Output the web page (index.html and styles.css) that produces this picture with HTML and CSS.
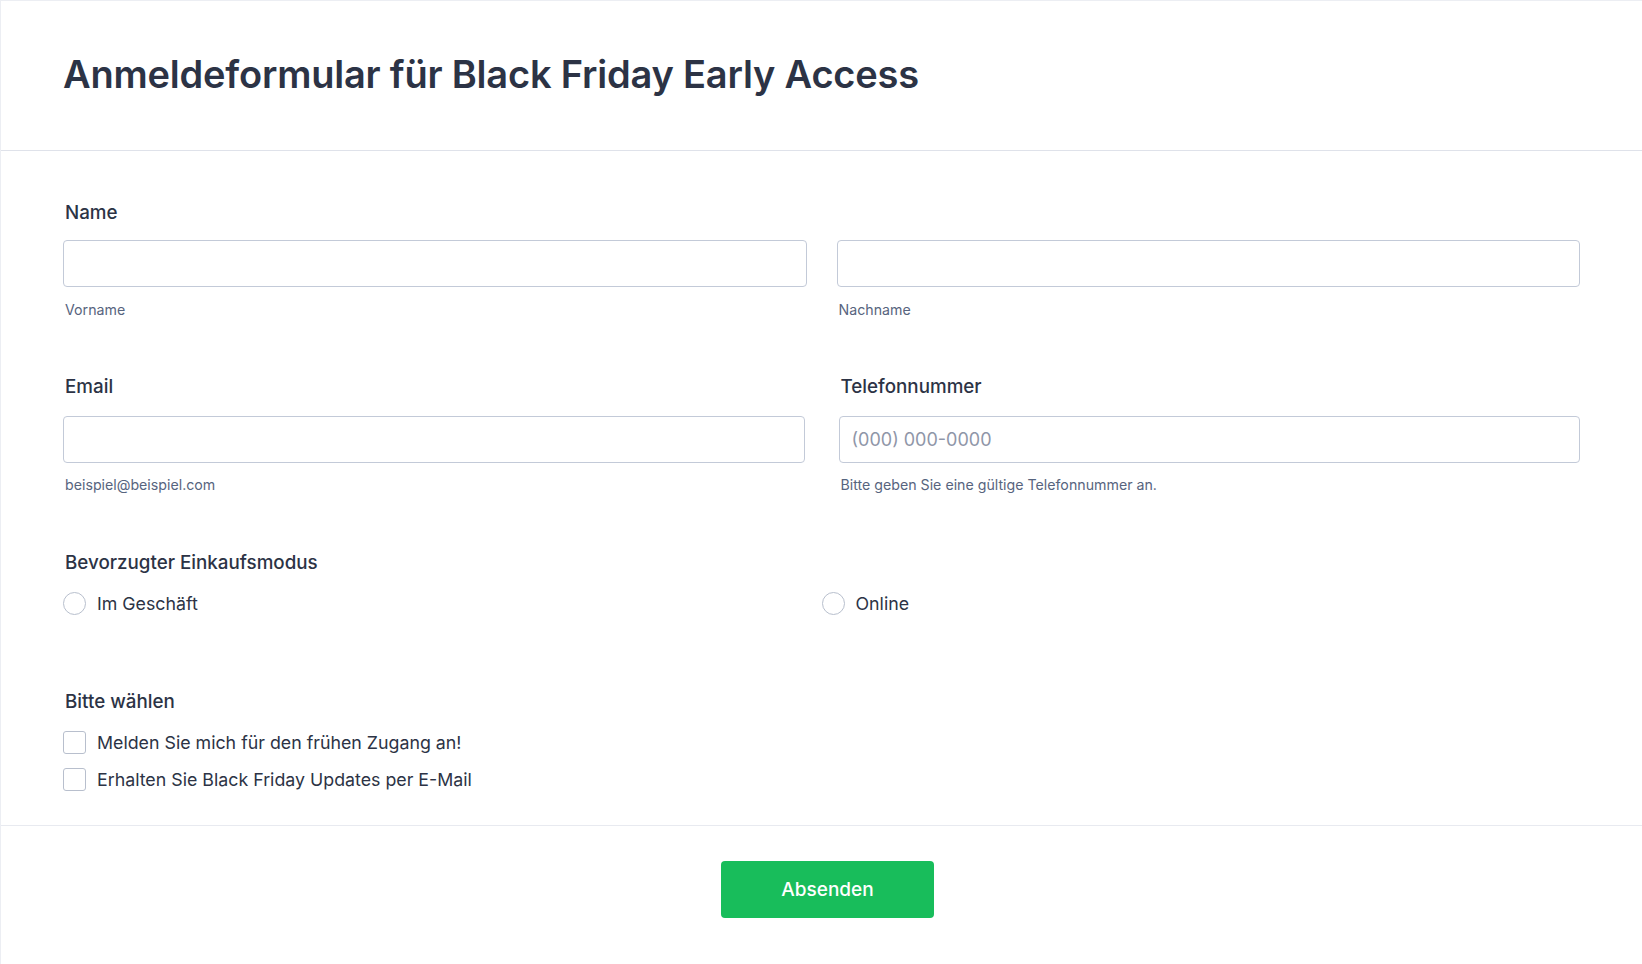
FILE: index.html
```html
<!DOCTYPE html>
<html lang="de">
<head>
<meta charset="utf-8">
<title>Anmeldeformular</title>
<link rel="stylesheet" href="styles.css">
</head>
<body>
<div class="card">
  <header class="header">
    <h1 class="title">Anmeldeformular für Black Friday Early Access</h1>
  </header>
  <form class="body">
    <div class="field field-name">
      <div class="label">Name</div>
      <div class="two-col gap-name">
        <div class="sub-field">
          <div class="input"></div>
          <div class="sublabel">Vorname</div>
        </div>
        <div class="sub-field">
          <div class="input"></div>
          <div class="sublabel">Nachname</div>
        </div>
      </div>
    </div>

    <div class="two-col gap-contact field-contact">
      <div class="field">
        <div class="label">Email</div>
        <div class="input"></div>
        <div class="sublabel">beispiel@beispiel.com</div>
      </div>
      <div class="field">
        <div class="label">Telefonnummer</div>
        <div class="input"><span class="placeholder">(000) 000-0000</span></div>
        <div class="sublabel">Bitte geben Sie eine gültige Telefonnummer an.</div>
      </div>
    </div>

    <div class="field field-radio">
      <div class="label">Bevorzugter Einkaufsmodus</div>
      <div class="radio-grid">
        <div class="option"><span class="radio"></span><span class="opt-text">Im Geschäft</span></div>
        <div class="option"><span class="radio"></span><span class="opt-text">Online</span></div>
      </div>
    </div>

    <div class="field field-check">
      <div class="label">Bitte wählen</div>
      <div class="checks">
        <div class="option"><span class="checkbox"></span><span class="opt-text">Melden Sie mich für den frühen Zugang an!</span></div>
        <div class="option"><span class="checkbox"></span><span class="opt-text">Erhalten Sie Black Friday Updates per E-Mail</span></div>
      </div>
    </div>
  </form>
  <footer class="footer">
    <div class="button">Absenden</div>
  </footer>
</div>
</body>
</html>
```

FILE: styles.css
```css
* { box-sizing: border-box; }
html, body { margin: 0; padding: 0; background: #ffffff; }
body {
  font-family: Inter, "Noto Sans", "Liberation Sans", sans-serif;
  color: #2c3345;
}
.card {
  border-top: 1px solid #eceef3;
  border-left: 1px solid #eceef3;
  min-height: 964px;
}
.header {
  height: 150px;
  padding: 0 62px 4px 62px;
  display: flex;
  align-items: center;
  border-bottom: 1px solid #dfe2ea;
}
.title {
  margin: 0;
  font-size: 38px;
  font-weight: 600;
  letter-spacing: -0.2px;
  color: #2c3345;
  line-height: 48px;
}
.body {
  padding: 50px 62px 34px 62px;
  border-bottom: 1px solid #e8eaf0;
}
.label {
  font-size: 18.8px;
  font-weight: 500;
  line-height: 24px;
  padding-left: 2px;
  color: #2c3345;
}
.two-col {
  display: grid;
  grid-template-columns: 1fr 1fr;
}
.gap-name { column-gap: 30px; margin-top: 15px; }
.gap-contact { column-gap: 34px; }
.field-contact { margin-top: 56px; }
.field-contact .input { margin-top: 17px; }
.input {
  height: 47px;
  border: 1px solid #c3cad8;
  border-radius: 4px;
  background: #fff;
  display: flex;
  align-items: center;
  padding: 0 12px;
}
.placeholder {
  font-size: 18px;
  color: #8f96a8;
}
.sublabel {
  font-size: 14.2px;
  line-height: 18px;
  color: #57647e;
  margin-top: 14px;
  padding-left: 2px;
}
.field-contact .sublabel { margin-top: 13px; }
.field-radio { margin-top: 57px; }
.radio-grid {
  display: grid;
  grid-template-columns: 1fr 1fr;
  margin-top: 17px;
}
.option {
  display: flex;
  align-items: center;
  height: 23px;
}
.radio {
  width: 23px;
  height: 23px;
  border: 1px solid #b8bfcd;
  border-radius: 50%;
  flex: none;
}
.checkbox {
  width: 23px;
  height: 23px;
  border: 1px solid #b8bfcd;
  border-radius: 3px;
  flex: none;
}
.opt-text {
  font-size: 17.8px;
  margin-left: 11px;
  color: #2c3345;
  line-height: 24px;
}
.field-check { margin-top: 75px; }
.checks {
  margin-top: 17px;
  display: flex;
  flex-direction: column;
  gap: 14px;
}
.footer {
  padding-top: 35px;
  display: flex;
  justify-content: center;
}
.button {
  width: 213px;
  height: 57px;
  background: #18bd5b;
  border-radius: 4px;
  color: #fff;
  font-size: 19px;
  font-weight: 500;
  display: flex;
  align-items: center;
  justify-content: center;
  margin-left: 12px;
}
```
